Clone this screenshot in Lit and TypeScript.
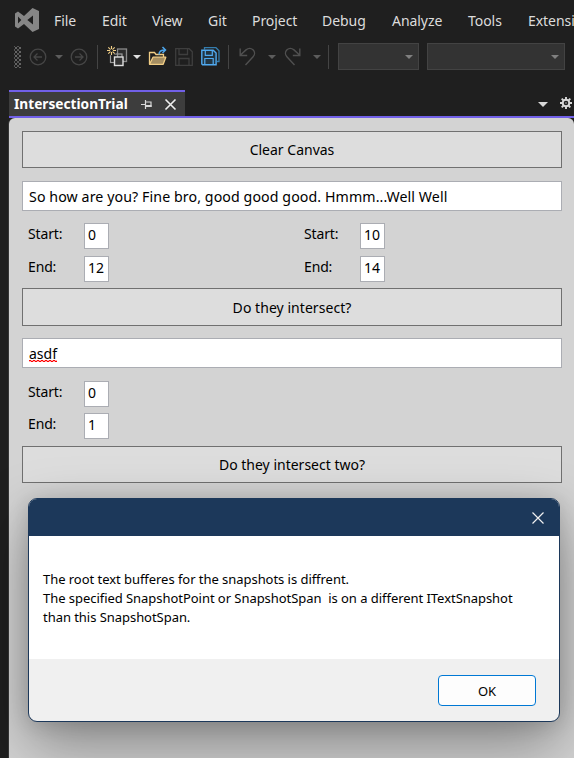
import { LitElement, html, css, svg } from "lit";
import { customElement } from "lit/decorators.js";

const MENU = ["File", "Edit", "View", "Git", "Project", "Debug", "Analyze", "Tools", "Extensi"];

const icon = (w: number, h: number, body: unknown, cls = "") =>
  html`<svg class=${cls} width=${w} height=${h} viewBox="0 0 ${w} ${h}" fill="none">${body}</svg>`;

const caret = (cls: string) => icon(8, 4, svg`<path d="M0 0h8L4 4z" fill="currentColor"/>`, cls);

const logo = icon(24, 24, svg`
  <path fill-rule="evenodd" fill="#868686" d="M17.500 0 24 3v18l-6.500 3-8.500-8L3 20.500 0 18.500v-13L3 3.500 9 8zM3 8.500v7L6.300 12zM18 7.500 12.300 12l5.700 4.500z"/>`);

const arrowCircle = (flip: boolean) => icon(18, 18, svg`
  <g stroke="#464646" stroke-width="1.300" transform=${flip ? "translate(18 0) scale(-1 1)" : ""}>
    <circle cx="9" cy="9" r="7.800"/><path d="M13 9H5M8.500 5.500 5 9l3.500 3.500"/>
  </g>`);

const newProject = icon(21, 21, svg`
  <rect x="10.500" y="3" width="9" height="12.500" fill="#2c2c2c" stroke="#8a8a8a" stroke-width="1.300"/>
  <rect x="3.500" y="8" width="11.500" height="8.500" stroke="#9c9c9c" stroke-width="1.200"/>
  <rect x="7.500" y="11" width="8.500" height="8.500" fill="#343434" stroke="#dedede" stroke-width="1.400"/>
  <circle cx="4.500" cy="4.500" r="5" fill="#202020"/>
  <path d="M4.500 0v9M0 4.500h9M1.300 1.300l6.400 6.400M7.700 1.300 1.300 7.700" stroke="#f2cf87" stroke-width="1.100"/>
  <circle cx="4.500" cy="4.500" r="1.500" fill="#202020"/>`);

const openFolder = icon(19, 19, svg`
  <path d="M1.500 17V5.500h5l1.500 2h7.500V10" stroke="#f1cd85" stroke-width="1.300"/>
  <path d="M1.500 17.300 5 10.200h12.800l-2.600 7.100z" fill="#a58e62" stroke="#f1cd85" stroke-width="1.300" stroke-linejoin="round"/>
  <path d="M11 7.500c0-3 1.500-4.500 6-4.500M14.500 0 17.500 3l-3 3" stroke="#4da6ec" stroke-width="1.500"/>`);

const save = icon(18, 18, svg`
  <path d="M.7.700h13.500l3.100 3v13.600H.7zM4 1v5.500h8.500V1M4 17v-6.500h10V17" stroke="#3e3e3e" stroke-width="1.300"/>`);

const saveAll = icon(19, 19, svg`
  <path d="M3.500 2.500V.7H15l3 3V14.500h-2" stroke="#347dae" stroke-width="1.300"/>
  <path d="M.8 3.300h11.400l2.900 2.800v11.600H1.600l-.8-.8z" fill="#223542" stroke="#50aaf0" stroke-width="1.400"/>
  <path d="M4.300 3.500v4.800h7V3.500M3.800 17.500v-6h8.400v6" stroke="#50aaf0" stroke-width="1.200"/>`);

const undo = (flip: boolean) => icon(17, 18, svg`
  <path transform=${flip ? "translate(17 0) scale(-1 1)" : ""} stroke="#505050" stroke-width="1.400"
    d="M1.200.500v7h7M1.500 7 7 1.900c2.500-2 5.200-1.700 7-.1 2 2 2 5 .1 7L6.500 17"/>`);

const pin = icon(11, 9, svg`
  <path d="M0 4.500h4M4.500 0v9M4.500 2h5.500v4.500H4.500" stroke="#d8d8d8" stroke-width="1.200"/><path d="M4.500 6h6" stroke="#d8d8d8" stroke-width="2"/>`);

const cross = (size: number, w: number) =>
  icon(size, size, svg`<path d="M.5.500 ${size - 0.5} ${size - 0.5}M${size - 0.5} .5.500 ${size - 0.5}" stroke="#f0f0f0" stroke-width=${w}/>`);

const gear = icon(12, 12, svg`
  <circle cx="6" cy="6" r="3.300" stroke="#d8d8d8" stroke-width="2"/>
  <path d="M6 0v2.500M6 9.500V12M0 6h2.500M9.500 6H12M1.700 1.700l1.800 1.800M8.500 8.500l1.800 1.800M10.300 1.700 8.500 3.500M3.500 8.500l-1.800 1.800" stroke="#d8d8d8" stroke-width="1.900"/>
  <circle cx="6" cy="6" r=".7" fill="#d8d8d8"/>`);

@customElement("app-root")
export class AppRoot extends LitElement {
  static styles = css`
    :host {
      display: block; position: relative; width: 574px; height: 758px; overflow: hidden;
      background: #1f1f1f; color: #000; font: 14px/20px "Noto Sans", "Open Sans", sans-serif;
    }
    * { box-sizing: border-box; }
    svg { display: block; flex: none; overflow: visible; }
    .menu { display: grid; grid-template-columns: 39px 48px 50px 56px 44px 70px 70px 76px 60px 46px; height: 40px; padding-left: 15px; align-items: center; color: #dcdcdc; white-space: nowrap; letter-spacing: -0.05px; }
    .menu span { padding-top: 1px; }
    .tools { display: flex; align-items: center; height: 33px; padding: 0 0 0 14px; }
    .tools > * { flex: none; }
    .grip { width: 7px; height: 22px; margin-right: 8px; background: radial-gradient(circle, #666 0.7px, transparent 1px) 0 0 / 4px 4px, radial-gradient(circle, #555 0.7px, transparent 1px) 2px 2px / 4px 4px; }
    .sep { width: 1px; height: 24px; background: #444; }
    .dim { color: #5c5c5c; }
    .lit { color: #e0e0e0; }
    .m5 { margin-left: 5px; } .m7 { margin-left: 7px; } .m8 { margin-left: 8px; } .m9 { margin-left: 9px; } .m10 { margin-left: 10px; } .m12 { margin-left: 12px; }
    .combo { height: 27px; background: #333; border: 1px solid #434343; display: flex; align-items: center; justify-content: flex-end; padding-right: 5px; color: #808080; }
    .c1 { width: 81px; margin-left: 9px; } .c2 { width: 138px; margin-left: 8px; }
    .tabs { display: flex; height: 28px; margin: 17px 0 0 9px; border-bottom: 2px solid #7160e8; }
    .tab { width: 176px; height: 26px; padding: 0 9px 0 5px; border-top: 2px solid #7160e8; background: #3d3d3d; display: flex; align-items: center; color: #fff; font-weight: 700; }
    .title { width: 128px; font-size: 13.700px; white-space: nowrap; }
    .tab svg + svg { margin-left: 13px; }
    .right { margin-left: auto; display: flex; align-items: center; gap: 12px; padding-right: 2px; color: #d8d8d8; }
    .right svg:first-child { margin-top: 3px; }
    .panel { margin-left: 9px; height: 640px; padding: 13px 12px 0 13px; border-radius: 6px 6px 0 0; background: #d3d3d3; box-shadow: -1px 0 #363636; }
    .btn { height: 37px; border: 1px solid #707070; background: #ddd; display: flex; align-items: center; justify-content: center; }
    .box { height: 30px; margin-top: 13px; padding: 1px 6px 0; border: 1px solid #abadb3; background: #fff; display: flex; align-items: center; white-space: pre; }
    .fields { display: grid; grid-template-columns: 62px 214px 62px 1fr; row-gap: 7px; margin: 12px 0 6px; }
    .label { padding: 1px 0 0 6px; letter-spacing: -0.15px; }
    .num { width: 25px; height: 26px; padding: 1px 0 0 3px; border: 1px solid #abadb3; background: #fff; }
    .two { row-gap: 6px; margin: 13px 0 7px; }
    .b2 { height: 38px; padding-top: 1px; letter-spacing: 0.05px; } .x2 { margin-top: 12px; padding-top: 2px; }
    .t1 { font-size: 14.200px; letter-spacing: 0.09px; }
    .wavy { background: repeating-linear-gradient(90deg, #f00 0 2px, #f005 2px 4px) 0 16px / 100% 1px no-repeat, repeating-linear-gradient(90deg, #f005 0 2px, #f00 2px 4px) 0 17px / 100% 1px no-repeat; }
    .dialog { position: absolute; left: 28px; top: 498px; width: 532px; height: 224px; border: 1px solid #1c385a; border-radius: 9px; background: #f0f0f0; overflow: hidden; display: flex; flex-direction: column; font-size: 13px; line-height: 19px; box-shadow: 0 24px 60px rgba(0,0,0,.36), 0 2px 20px rgba(0,0,0,.14); }
    .head { height: 37px; background: #1c385a; display: flex; align-items: center; justify-content: flex-end; padding-right: 15px; }
    .body { height: 123px; background: #fff; padding: 34px 14px 0; white-space: pre; letter-spacing: -0.045px; }
    .foot { padding: 16px 23px 0; display: flex; justify-content: flex-end; }
    .ok { width: 98px; height: 31px; border: 1px solid #0078d4; border-radius: 4px; background: #fdfdfd; display: flex; align-items: center; justify-content: center; padding-top: 1px; }
  `;

  private field(label: string, value: string) {
    return html`<span class="label">${label}</span><span class="num">${value}</span>`;
  }

  render() {
    return html`
      <div class="menu">${logo}${MENU.map((m) => html`<span>${m}</span>`)}</div>
      <div class="tools">
        <div class="grip"></div>
        ${arrowCircle(false)}<span class="m8">${caret("dim")}</span><span class="m7">${arrowCircle(true)}</span>
        <span class="sep m9"></span>
        <span class="m9">${newProject}</span><span class="m5">${caret("lit")}</span>
        <span class="m7">${openFolder}</span><span class="m8">${save}</span><span class="m8">${saveAll}</span>
        <span class="sep m8"></span>
        <span class="m10">${undo(false)}</span><span class="m12">${caret("dim")}</span>
        <span class="m8">${undo(true)}</span><span class="m12">${caret("dim")}</span>
        <span class="sep m7"></span>
        <div class="combo c1">${caret("")}</div><div class="combo c2">${caret("")}</div>
      </div>
      <div class="tabs">
        <div class="tab"><span class="title">IntersectionTrial</span>${pin}${cross(11, 1.6)}</div>
        <div class="right">${icon(10, 5, svg`<path d="M0 0h10L5 5z" fill="currentColor"/>`)}${gear}</div>
      </div>
      <div class="panel">
        <div class="btn">Clear Canvas</div>
        <div class="box"><span class="t1">So how are you? Fine bro, good good good. Hmmm...Well Well</span></div>
        <div class="fields">
          ${this.field("Start:", "0")}${this.field("Start:", "10")}
          ${this.field("End:", "12")}${this.field("End:", "14")}
        </div>
        <div class="btn b2">Do they intersect?</div>
        <div class="box x2"><span class="wavy">asdf</span></div>
        <div class="fields two">
          ${this.field("Start:", "0")}<span></span><span></span>
          ${this.field("End:", "1")}
        </div>
        <div class="btn">Do they intersect two?</div>
      </div>
      <div class="dialog">
        <div class="head">${cross(12, 1.2)}</div>
        <div class="body">${"The root text bufferes for the snapshots is diffrent.\nThe specified SnapshotPoint or SnapshotSpan  is on a different ITextSnapshot\nthan this SnapshotSpan."}</div>
        <div class="foot"><div class="ok">OK</div></div>
      </div>
    `;
  }
}
